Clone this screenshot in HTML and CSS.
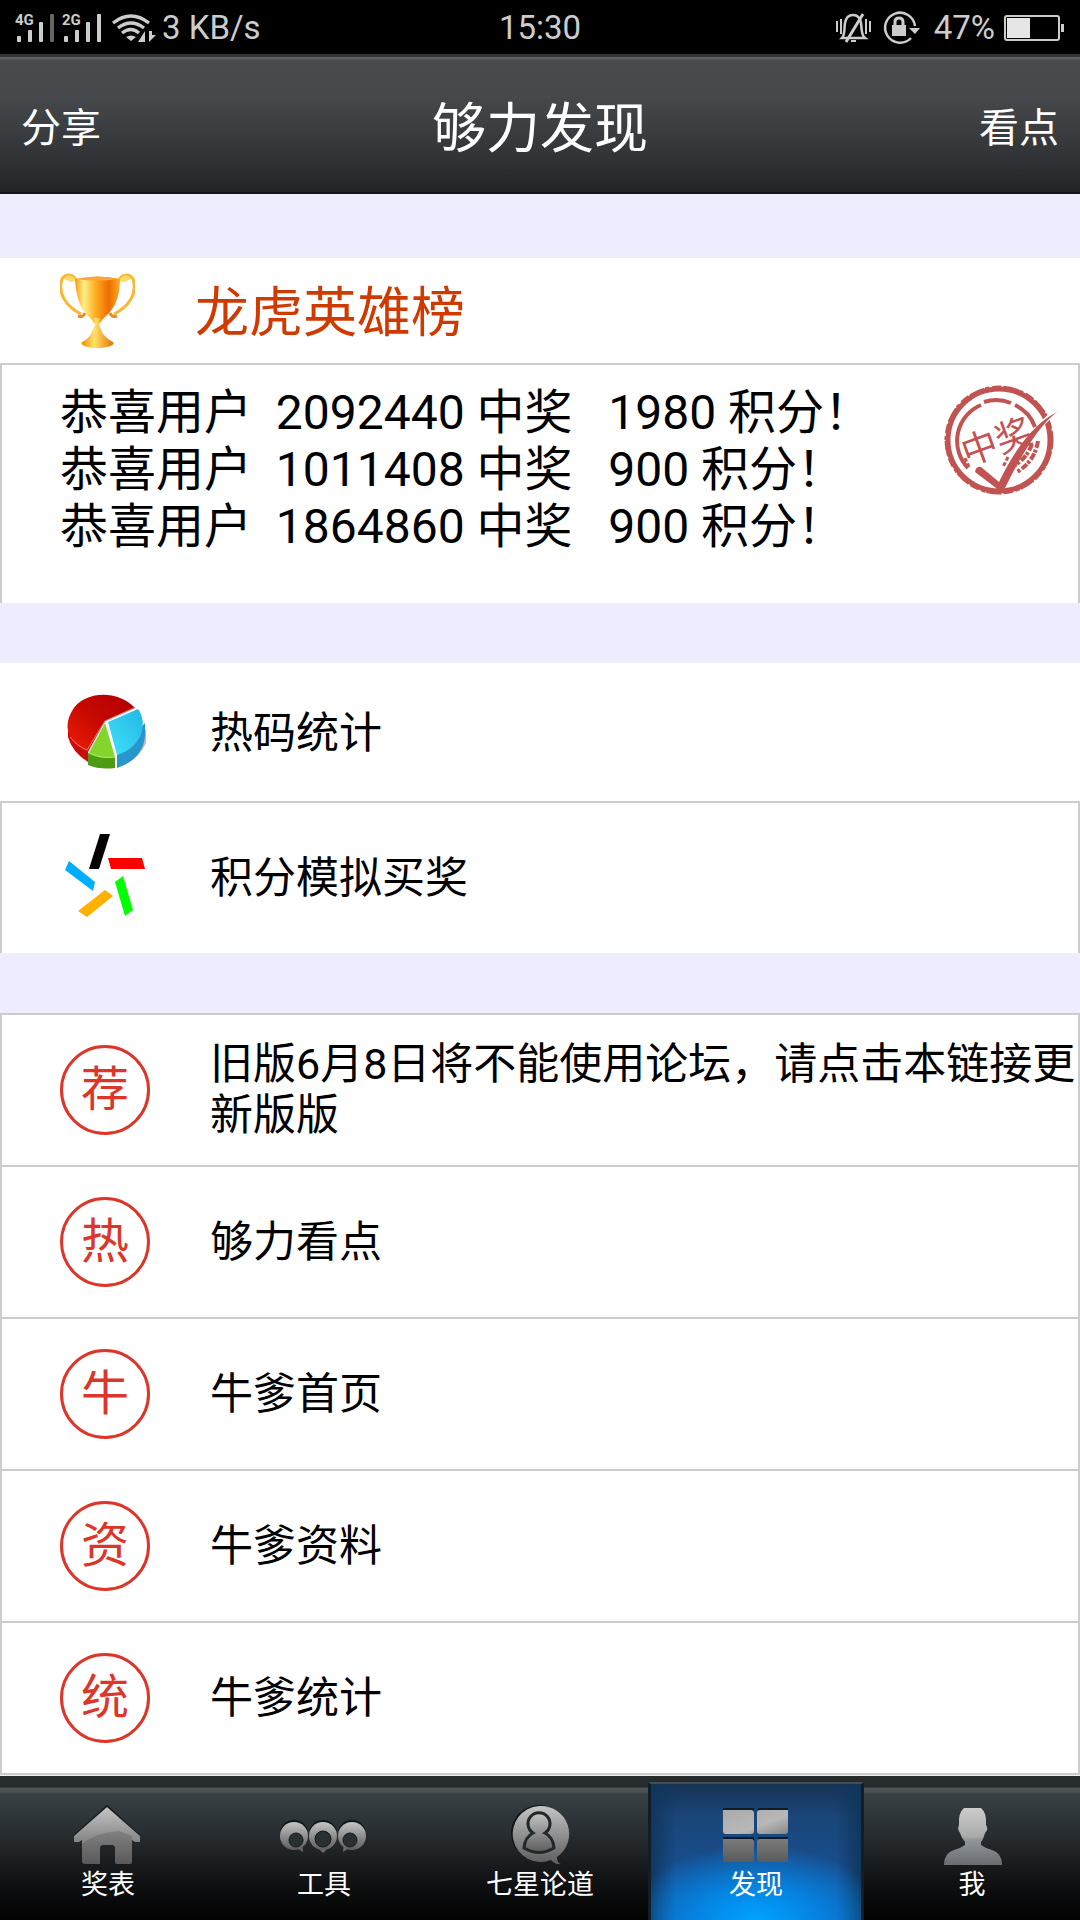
FILE: index.html
```html
<!DOCTYPE html>
<html lang="zh-CN">
<head>
<meta charset="utf-8">
<meta name="viewport" content="width=device-width, initial-scale=1">
<title>够力发现</title>
<link rel="stylesheet" href="styles.css">
</head>
<body>
<div class="app">
  <div class="status">
    <div class="status-side">
      <svg class="status-net" viewBox="0 0 162 54" aria-hidden="true">
        <g fill="#ccc">
          <rect x="17" y="35" width="4" height="6" rx="1"/><rect x="28" y="29" width="4" height="12" rx="1"/><rect x="39" y="21" width="4" height="20" rx="1"/>
          <rect x="50" y="13" width="4" height="28" rx="1" fill="#666"/>
          <rect x="64" y="35" width="4" height="6" rx="1"/><rect x="75" y="29" width="4" height="12" rx="1"/><rect x="86" y="21" width="4" height="20" rx="1"/><rect x="97" y="13" width="4" height="28" rx="1"/>
          <path d="M131 40l-5-4q5-3 10 0z"/>
          <path d="M145 30v11h-7zM149 30v11l7-7h-4v-4z"/>
        </g>
        <g fill="none" stroke="#ccc" stroke-width="3.4">
          <path d="M113 22q18-14 36 0M118 27q13-10 26 0M122 32q9-7 17 0"/>
        </g>
        <g class="net-label"><text x="15" y="24">4G</text><text x="62" y="24">2G</text></g>
      </svg>
      <span>3 KB/s</span>
    </div>
    <span class="clock">15:30</span>
    <div class="status-side status-right">
      <svg class="status-alarm" viewBox="0 0 90 54" aria-hidden="true">
        <g fill="none" stroke="#ccc" stroke-width="2">
          <path d="M1 20v11M5 18v15M30 18v15M34 20v11"/>
          <path d="M6 37h23c-4-3-3-8-4-15c-1-6-4-8-8-8s-7 2-8 8c-1 7 0 12-3 15z" stroke-width="2.5"/>
          <path d="M27 13L10 41" stroke-width="3"/><path d="M15 40h5"/>
          <path d="M75 37a15 15 0 1 1 4-12" stroke-width="2.5"/>
          <path d="M59 25v-4q0-4 4-4t4 4v4" stroke-width="3"/>
        </g>
        <path fill="#ccc" d="M56 24h14v11H56zM73 27h11l-5 6z"/>
      </svg>
      <span>47%</span>
      <svg class="status-battery" viewBox="0 0 62 54" aria-hidden="true">
        <rect x="2" y="15" width="54" height="24" rx="2" fill="none" stroke="#ccc" stroke-width="2"/>
        <path fill="#e6e6e6" d="M4 17h23v20H4z"/><path fill="#ccc" d="M58 23h3v8h-3z"/>
      </svg>
    </div>
  </div>

  <header class="header">
    <button class="header-btn" type="button">分享</button>
    <h1 class="title">够力发现</h1>
    <button class="header-btn header-end" type="button">看点</button>
  </header>

  <main class="content">
    <section class="group">
      <a class="hero" href="#rank">
        <svg class="trophy" viewBox="0 0 75 75" aria-hidden="true">
          <defs>
            <linearGradient id="gold"><stop offset="0" stop-color="#f79a10"/><stop offset=".2" stop-color="#fff08a"/><stop offset=".45" stop-color="#fdb022"/><stop offset=".75" stop-color="#ee6c00"/><stop offset="1" stop-color="#fbac24"/></linearGradient>
            <linearGradient id="foot"><stop offset="0" stop-color="#ee8a00"/><stop offset=".4" stop-color="#ffe36a"/><stop offset="1" stop-color="#ea7000"/></linearGradient>
          </defs>
          <path d="M17 9C14 1 6 0 2 6C-3 21 7 34 21 41M58 9C61 1 69 0 73 6C78 21 68 34 54 41" fill="none" stroke="#f8b735" stroke-width="3"/>
          <path d="M16 8C13 1 6 1 4 6l7 3zM59 8C62 1 69 1 71 6l-7 3z" fill="#ffd968"/>
          <path d="M25 40q-2 5-7 3M50 40q2 5 7 3" fill="none" stroke="#e98c24" stroke-width="3"/>
          <path d="M15 6Q37 1 60 6C60 25 54 36 46 43Q42 46 40 50H34Q32 46 28 43C19 34 16 22 15 6z" fill="url(#gold)"/>
          <path d="M16 6Q37 1 59 6Q37 9 16 6z" fill="#f7a83b"/>
          <path d="M34 45h6l-1 7 4 9q4 5 10 8c5 8-36 8-31 0q6-3 9-8l4-9z" fill="url(#foot)"/>
        </svg>
        <h2 class="hero-title">龙虎英雄榜</h2>
      </a>
      <div class="winners">
        <div class="winner-list">
          <p class="winner">恭喜用户  2092440 中奖   1980 积分！</p>
          <p class="winner">恭喜用户  1011408 中奖   900 积分！</p>
          <p class="winner">恭喜用户  1864860 中奖   900 积分！</p>
        </div>
        <svg class="stamp" viewBox="0 0 114 114" aria-hidden="true">
          <g fill="none" stroke="#c15453">
            <circle cx="56" cy="56" r="51" stroke-width="5"/>
            <circle cx="56" cy="56" r="52" stroke-width="5" stroke-dasharray="9 2 15 1 4 3"/>
            <path d="M25 84A39 39 0 0 1 38 21M41 18A39 39 0 0 1 68 19M72 21A39 39 0 0 1 92 43" stroke-width="4"/>
            <path d="M95 57Q92 77 74 88M89 60Q84 74 72 81" stroke-width="4" stroke-dasharray="7 2 3 1"/>
            <path d="M65 73l-5 10M22 74l4 9" stroke-width="3" stroke-dasharray="4 2"/>
          </g>
          <text class="stamp-text" transform="translate(24 82) rotate(-20)">中奖</text>
          <path d="M114 28Q104 33 98 42" fill="none" stroke="#fff" stroke-width="5"/>
          <path d="M114 28Q91 45 62 104L57 107 32 88q1-6 6-5l18 15Q82 44 114 28z" fill="#c15453"/>
        </svg>
      </div>
    </section>

    <section class="group">
      <a class="row row-first" href="#hot">
        <svg class="row-icon" viewBox="0 2 90 90" aria-hidden="true">
          <defs>
            <linearGradient id="pred" x1="1" x2="0" y2="1"><stop offset="0" stop-color="#ad0000"/><stop offset=".5" stop-color="#c70802"/><stop offset="1" stop-color="#ee2006"/></linearGradient>
            <linearGradient id="pblue" x1="1" x2="0" y2="1"><stop offset="0" stop-color="#23b7e5"/><stop offset="1" stop-color="#42e1fa"/></linearGradient>
          </defs>
          <path d="M57 82Q79 74 86 57V43L60 73z" fill="#bbb"/>
          <path d="M8 40V51Q12 66 28 76V64z" fill="#c90c0c"/>
          <path d="M45 35L75 22C56 2 22 6 12 25C1 44 12 59 28 66z" fill="url(#pred)"/>
          <path d="M10 51Q17 60 27 64L45 35L74 22" fill="none" stroke="#f28070" stroke-width="1"/>
          <path d="M28 67v12q12 5 27 3V71z" fill="#4c9c13"/>
          <path d="M45 37L29 67q11 6 26 4z" fill="#83d42b"/><path d="M29 67q11 6 26 4" stroke="#b8ee72" fill="none"/>
          <path d="M57 69v13Q83 73 85 50V37z" fill="#2796cc"/>
          <path d="M48 36L78 23C88 36 83 61 57 69z" fill="url(#pblue)"/>
        </svg>
        <span class="row-text">热码统计</span>
      </a>
      <a class="row" href="#simulate">
        <svg class="row-icon" viewBox="0 0 90 90" aria-hidden="true">
          <path d="M40 1h10L39 36H29z"/><path d="M48 25h34l3 11H51z" fill="red"/>
          <path d="M55 49l8-6 10 34-8 6z" fill="#0f0"/><path d="M45 57l8 6-26 21-9-6z" fill="#ffb000"/>
          <path d="M9 28l26 21-2 9L5 37z" fill="#00aeff"/>
        </svg>
        <span class="row-text">积分模拟买奖</span>
      </a>
    </section>

    <section class="group">
      <a class="row" href="#update"><span class="row-icon badge">荐</span><span class="row-text">旧版6月8日将不能使用论坛，请点击本链接更新版版</span></a>
      <a class="row" href="#views"><span class="row-icon badge">热</span><span class="row-text">够力看点</span></a>
      <a class="row" href="#home"><span class="row-icon badge">牛</span><span class="row-text">牛爹首页</span></a>
      <a class="row" href="#data"><span class="row-icon badge">资</span><span class="row-text">牛爹资料</span></a>
      <a class="row row-last" href="#stats"><span class="row-icon badge">统</span><span class="row-text">牛爹统计</span></a>
    </section>
  </main>

  <nav class="tabs">
    <a class="tab" href="#prizes">
      <svg class="tab-icon" viewBox="0 0 90 60" aria-hidden="true">
        <defs>
          <linearGradient id="grey" x2="0" y2="1"><stop offset="0" stop-color="#c4c4c4"/><stop offset="1" stop-color="#5c5c5c"/></linearGradient>
        </defs>
        <path d="M44 0L77 30v2L44 3 11 32v-2z" fill="#111618"/>
        <path d="M44 2L77 31v6h-5l-3-2v22q0 2-2 2H54q-2 0-2-2V43q0-3-3-3H40q-3 0-3 3v16H22q-3 0-3-3V35l-3 2h-5v-6z" fill="url(#grey)"/>
        <path d="M19 39Q34 27 56 26L69 31v26q0 2-2 2H54q-2 0-2-2V43q0-3-3-3H40q-3 0-3 3v16H22q-3 0-3-3z" fill="#555" opacity=".35"/>
      </svg>
      <span>奖表</span>
    </a>
    <a class="tab" href="#tools">
      <svg class="tab-icon" viewBox="0 0 90 60" aria-hidden="true">
        <g fill="#111618"><circle cx="15" cy="29" r="14"/><circle cx="44" cy="29" r="14"/><circle cx="73" cy="29" r="14"/></g>
        <path d="M18 43l6 4-1-9zM39 43l5 5 5-5zM70 43l-6 4 1-9z" fill="#6c6c6c"/>
        <g fill="url(#grey)"><circle cx="15" cy="31" r="14"/><circle cx="44" cy="31" r="14"/><circle cx="73" cy="31" r="14"/></g>
        <g fill="#293033" stroke="#15191b" stroke-width="1"><circle cx="17" cy="35" r="7"/><circle cx="44" cy="34" r="8"/><circle cx="71" cy="35" r="7"/></g>
      </svg>
      <span>工具</span>
    </a>
    <a class="tab" href="#forum">
      <svg class="tab-icon" viewBox="0 0 90 60" aria-hidden="true">
        <circle cx="44" cy="28" r="28" fill="#111618"/>
        <path d="M44 1a28 28 0 1 0 12 54q4 5 10 4-4-1-4-7A28 28 0 0 0 44 1z" fill="url(#grey)"/>
        <path d="M38 28a11 11 0 1 1 12 0q8 4 9 15-15 9-30 0 1-11 9-15z" fill="url(#grey)" stroke="#22282a" stroke-width="3"/>
      </svg>
      <span>七星论道</span>
    </a>
    <a class="tab tab-active" href="#discover" aria-current="page">
      <svg class="tab-icon" viewBox="0 0 90 60" aria-hidden="true">
        <defs>
          <linearGradient id="tileTop" x2="1" y2="1"><stop offset="0" stop-color="#aaa"/><stop offset=".6" stop-color="#b8b8b8"/><stop offset="1" stop-color="#888"/></linearGradient>
          <linearGradient id="tileLow" x2="0" y2="1"><stop offset="0" stop-color="#7c7c7c"/><stop offset="1" stop-color="#5a5a5a"/></linearGradient>
        </defs>
        <path d="M12 3h31v8H12zM47 3h30v8H47zM12 32h31v8H12zM47 32h30v8H47z" fill="#101a28"/>
        <path d="M12 5h28q3 0 3 3v18q0 3-3 3H15q-3 0-3-3zM46 8q0-3 3-3h28v21q0 3-3 3H49q-3 0-3-3z" fill="url(#tileTop)"/>
        <path d="M12 34h28q3 0 3 3v17q0 3-3 3H12zM46 37q0-3 3-3h28v23H49q-3 0-3-3z" fill="url(#tileLow)"/>
      </svg>
      <span>发现</span>
    </a>
    <a class="tab" href="#me">
      <svg class="tab-icon" viewBox="0 0 90 60" aria-hidden="true">
        <defs><linearGradient id="man" x2="0" y2="1"><stop offset="0" stop-color="#ccc"/><stop offset=".5" stop-color="#aaa"/><stop offset=".55" stop-color="#92979b"/><stop offset="1" stop-color="#696c71"/></linearGradient></defs>
        <path d="M37 3h17q6 5 5 17 3 4-1 8-2 7-4 9v3q4 3 11 5 10 3 10 15H17q0-12 10-15 7-2 11-5v-3q-3-3-5-9-3-4-1-8-1-12 5-17z" fill="url(#man)"/>
      </svg>
      <span>我</span>
    </a>
  </nav>
</div>
</body>
</html>
```
FILE: styles.css
```css
* {
  box-sizing: border-box;
}

body {
  margin: 0;
  background: #eeedff;
  color: #000;
  font-family: Roboto, "Noto Sans CJK SC", sans-serif;
}

a {
  color: inherit;
  text-decoration: none;
}

h1,
h2,
p {
  margin: 0;
  font-weight: 400;
}

.app {
  display: flex;
  flex-direction: column;
  min-height: 100vh;
}

/* Status bar */
.status {
  display: grid;
  grid-template-columns: 1fr auto 1fr;
  align-items: center;
  height: 54px;
  background: #000;
  color: #ccc;
  font-size: 33px;
  line-height: 56px;
}

.status-side {
  display: flex;
  align-items: center;
}

.status-right {
  justify-content: flex-end;
  gap: 8px;
  padding-right: 15px;
}

.status-net {
  width: 162px;
  height: 54px;
}

.net-label {
  fill: #ccc;
  font-size: 15px;
  font-weight: 700;
}

.status-alarm {
  width: 90px;
  height: 54px;
}

.status-battery {
  width: 62px;
  height: 54px;
}

/* Header */
.header {
  display: grid;
  grid-template-columns: 1fr auto 1fr;
  align-items: center;
  height: 140px;
  padding: 0 21px;
  border-top: 3px solid #313437;
  border-bottom: 2px solid #111415;
  background: linear-gradient(#66696c, #474b4d 4px, #45494b 40px, #303437 100px, #202424);
  color: #fff;
}

.header-btn {
  justify-self: start;
  padding: 0;
  border: 0;
  background: none;
  color: inherit;
  font: inherit;
  font-size: 40px;
}

.header-end {
  justify-self: end;
}

.title {
  font-size: 54px;
}

/* Content */
.content {
  display: flex;
  flex: 1;
  flex-direction: column;
  gap: 60px;
  padding-top: 64px;
}

.group {
  background: #fff;
}

.hero {
  display: flex;
  align-items: center;
  gap: 60px;
  height: 105px;
  padding: 0 60px;
  color: #cf3a00;
}

.trophy {
  width: 75px;
  height: 75px;
}

.hero-title {
  padding-bottom: 4px;
  font-size: 54px;
}

.winners {
  display: flex;
  justify-content: space-between;
  height: 240px;
  padding: 19px 21px 0 58px;
  border: 2px solid #ccc;
  border-bottom: 0;
}

.winner {
  font-size: 48px;
  line-height: 57px;
  white-space: pre;
}

.stamp {
  width: 114px;
  height: 114px;
}

.stamp-text {
  fill: #c15453;
  font-size: 36px;
}

.row {
  display: flex;
  align-items: center;
  gap: 60px;
  min-height: 152px;
  padding: 0 0 0 58px;
  border: 2px solid #ccc;
  border-bottom: 0;
}

.row-first {
  min-height: 138px;
  border-color: transparent;
}

.row-last {
  min-height: 154px;
  border-bottom: 2px solid #ccc;
}

.row-icon {
  flex: none;
  width: 90px;
  height: 90px;
}

.row-text {
  font-size: 43px;
  line-height: 51px;
}

.badge {
  display: grid;
  place-items: center;
  border: 3px solid #dc3529;
  border-radius: 50%;
  color: #dc3529;
  font-size: 48px;
  line-height: 48px;
}

/* Tab bar */
.tabs {
  display: grid;
  grid-template-columns: repeat(5, 1fr);
  height: 144px;
  background: linear-gradient(#262b2e 11px, #4e5356 12px, #4e5356 15px, #384144 18px, #24292c 65px, #101213 105px, #020202);
}

.tab {
  display: flex;
  flex-direction: column;
  align-items: center;
  padding-top: 29px;
  color: #fff;
  font-size: 27px;
  line-height: 40px;
}

.tab-icon {
  width: 90px;
  height: 60px;
}

.tab-active {
  margin-top: 6px;
  padding-top: 21px;
  border-top: 2px solid #484b4e;
  border-right: 3px solid #111e2a;
  border-left: 3px solid #111e2a;
  background:
    radial-gradient(ellipse 130px 75px at 50% 100%, #00a4ff, #028deecc 45%, #0e62bd00),
    linear-gradient(90deg, #10365c, #10365c00 12%, #10365c00 88%, #10365c),
    linear-gradient(#163354, #1a4679 25%, #194b87 50%, #1060b8);
}
```
